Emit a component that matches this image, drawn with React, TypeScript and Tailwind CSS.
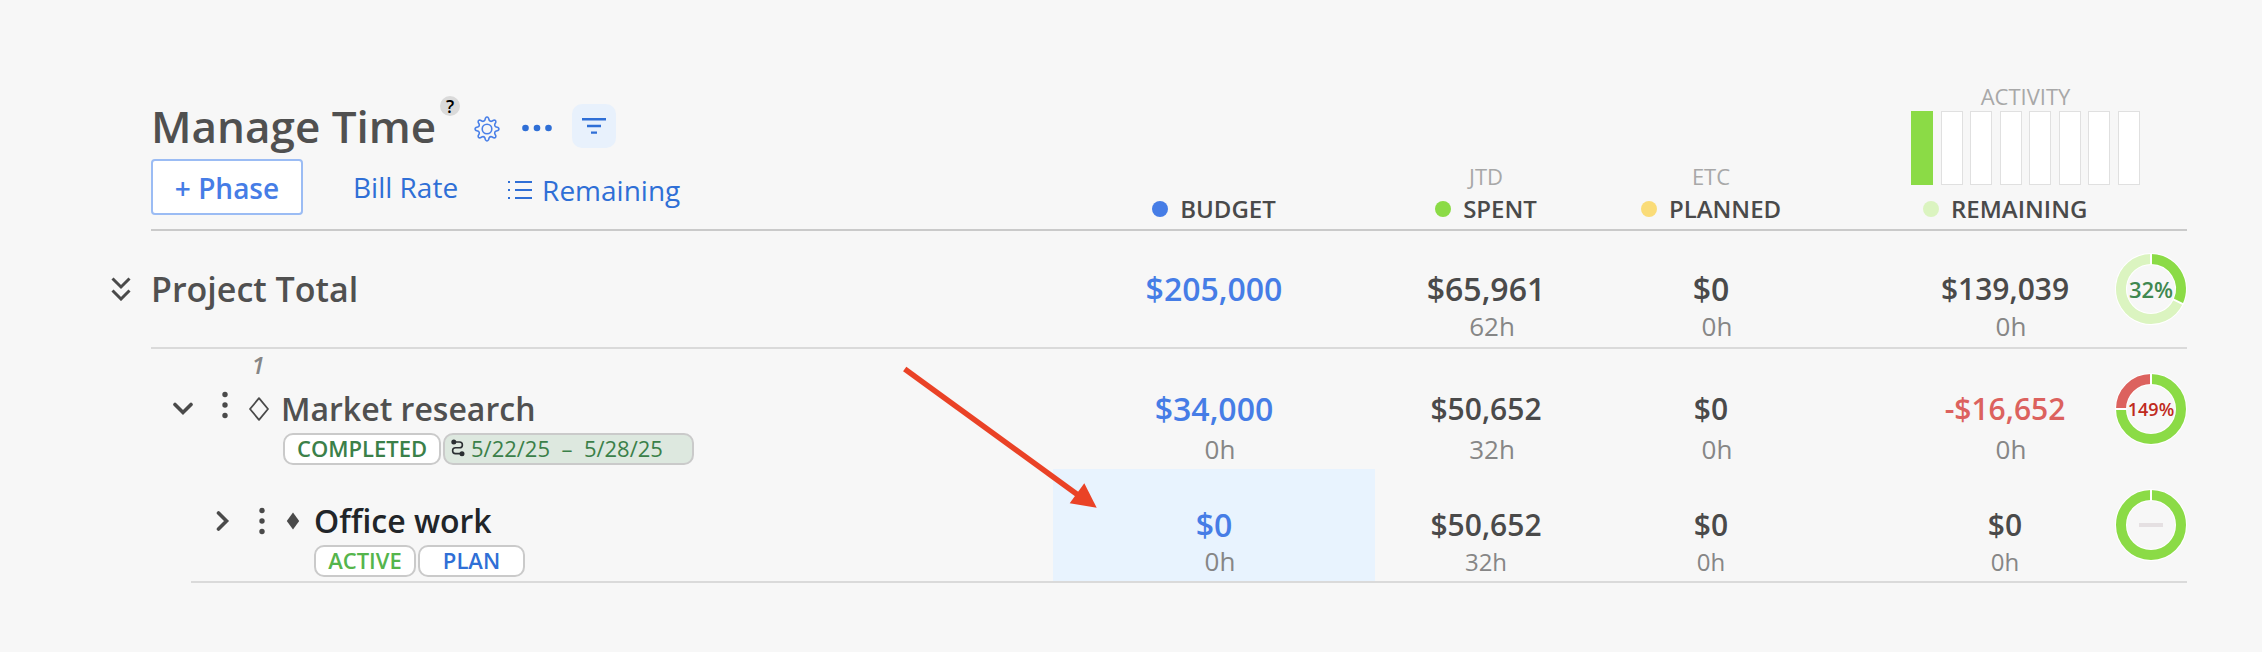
import clsx from "clsx";

type Amount = { value: string; hours?: string; valueClass?: string; hoursClass?: string };

const LARGE = "text-[32px]";
const MEDIUM = "text-[30px]";
const HOURS = "text-[26px] pl-3";
const HOURS_SMALL = "text-[24px] pt-px";

/* ---------- ICONS ---------- */

function gearPath() {
  const point = (radius: number, degrees: number) => {
    const a = (degrees * Math.PI) / 180;
    return `${(13 + radius * Math.sin(a)).toFixed(2)} ${(13 - radius * Math.cos(a)).toFixed(2)}`;
  };
  let d = "";
  for (let i = 0; i < 8; i++) {
    const a = i * 45;
    d += `${i === 0 ? "M" : "L"}${point(9, a - 14)} L${point(11, a - 8)} Q${point(13, a)} ${point(11, a + 8)} L${point(9, a + 14)} Q${point(8, a + 22)} ${point(9, a + 31)} `;
  }
  return d + "Z";
}

function GearIcon() {
  return (
    <svg width="26" height="26" viewBox="0 0 26 26" fill="none" stroke="currentColor" strokeWidth="1.6" strokeLinejoin="round">
      <path d={gearPath()} />
      <circle cx="13" cy="13" r="4.8" />
    </svg>
  );
}

function MoreIcon() {
  return (
    <svg width="30" height="8" viewBox="0 0 30 8" fill="currentColor">
      <circle cx="3.5" cy="4" r="3.3" />
      <circle cx="15" cy="4" r="3.3" />
      <circle cx="26.5" cy="4" r="3.3" />
    </svg>
  );
}

function FilterIcon() {
  return (
    <svg width="24" height="16" viewBox="0 0 24 16" fill="currentColor">
      <path d="M0 0h24v2.5H0zM5 6.8h14v2.4H5zM9 13.4h6v2.4H9z" />
    </svg>
  );
}

function ListIcon() {
  return (
    <svg width="24" height="20" viewBox="0 0 24 20" fill="currentColor">
      <path d="M7 1h17v2H7zM7 9h17v2H7zM7 17h17v2H7zM0 1h2v2H0zM0 9h2v2H0zM0 17h2v2H0z" />
    </svg>
  );
}

function DoubleChevronIcon() {
  return (
    <svg width="20" height="24" viewBox="0 0 20 24" fill="none" stroke="currentColor" strokeWidth="3">
      <path d="M1.5 1.5 10 10l8.5-8.5M1.5 13.5 10 22l8.5-8.5" />
    </svg>
  );
}

function ChevronDownIcon() {
  return (
    <svg width="20" height="14" viewBox="0 0 20 14" fill="none" stroke="currentColor" strokeWidth="3.6">
      <path d="m2 2.5 8 8 8-8" strokeLinecap="round" />
    </svg>
  );
}

function ChevronRightIcon() {
  return (
    <svg width="14" height="20" viewBox="0 0 14 20" fill="none" stroke="currentColor" strokeWidth="3.6">
      <path d="m2.5 2 8 8-8 8" strokeLinecap="round" />
    </svg>
  );
}

function KebabIcon() {
  return (
    <svg width="8" height="28" viewBox="0 0 8 28" fill="currentColor">
      <circle cx="4" cy="3.5" r="2.7" />
      <circle cx="4" cy="14" r="2.7" />
      <circle cx="4" cy="24.5" r="2.7" />
    </svg>
  );
}

function DiamondIcon() {
  return (
    <svg width="20" height="24" viewBox="0 0 20 24" fill="none" stroke="currentColor" strokeWidth="1.8" strokeLinejoin="round">
      <path d="M10 1.2 19 12l-9 10.8L1 12z" />
    </svg>
  );
}

function SmallDiamondIcon() {
  return (
    <svg width="14" height="18" viewBox="0 0 14 18" fill="currentColor">
      <path d="M7 .5 13.2 9 7 17.5.8 9z" />
    </svg>
  );
}

function RouteIcon() {
  return (
    <svg width="14" height="18" viewBox="0 0 14 18" fill="none" stroke="#2b2f33" strokeWidth="1.6">
      <path d="M3 3h5.5a2.9 2.9 0 0 1 0 5.8h-4a2.9 2.9 0 0 0 0 5.8H11" />
      <circle cx="2.8" cy="3" r="1.7" fill="#2b2f33" />
      <circle cx="11" cy="14.8" r="1.7" fill="#2b2f33" />
    </svg>
  );
}

/* ---------- DONUT ---------- */

type Slice = { from: number; to: number; color: string };

function Donut({ slices, label, labelClass }: { slices: Slice[]; label?: string; labelClass?: string }) {
  const point = (radius: number, turn: number) => {
    const a = turn * 2 * Math.PI;
    return `${(36 + radius * Math.sin(a)).toFixed(2)} ${(36 - radius * Math.cos(a)).toFixed(2)}`;
  };

  return (
    <div className="relative -mt-4 size-[72px]">
      <svg width="72" height="72" viewBox="0 0 72 72" fill="none">
        <circle cx="36" cy="36" r="30" stroke="#fff" strokeWidth="12" />
        {slices.map((s) =>
          s.to - s.from === 1 ? (
            <circle key={s.from} cx="36" cy="36" r="30" stroke={s.color} strokeWidth="10" />
          ) : (
            <path
              key={s.from}
              d={`M${point(30, s.from)} A30 30 0 ${s.to - s.from > 0.5 ? 1 : 0} 1 ${point(30, s.to)}`}
              stroke={s.color}
              strokeWidth="10"
            />
          )
        )}
        {slices.map((s) => (
          <path key={s.from} d={`M${point(24, s.from)} L${point(36, s.from)}`} stroke="#fff" strokeWidth="2" />
        ))}
        {!label && <path d="M24 36h24" stroke="#e5e0e2" strokeWidth="4" />}
      </svg>
      {label && (
        <span className={clsx("absolute inset-0 flex items-center justify-center font-semibold", labelClass)}>
          {label}
        </span>
      )}
    </div>
  );
}

/* ---------- CELLS ---------- */

function AmountText({ value, hours, valueClass, hoursClass }: Amount) {
  return (
    <>
      <div className={clsx("font-semibold leading-10", valueClass)}>{value}</div>
      {hours && <div className={clsx("leading-8 text-[#868686]", hoursClass)}>{hours}</div>}
    </>
  );
}

function ColumnTitle({ dotClass, children }: { dotClass: string; children: string }) {
  return (
    <div className="flex items-center gap-3 text-[24px] leading-[30px] font-semibold text-[#4a4a4a]">
      <span className={clsx("size-4 rounded-full", dotClass)} />
      {children}
    </div>
  );
}

function Tag({ className, children }: { className: string; children: React.ReactNode }) {
  return (
    <button
      type="button"
      className={clsx("flex h-8 items-center rounded-[10px] border-2 border-[#cacaca] pb-0.5 text-[22px] leading-[26px]", className)}
    >
      {children}
    </button>
  );
}

export default function App() {
  return (
    <main className="min-h-screen bg-[#f7f7f7] pt-[81px] pr-[75px] pb-16 pl-[106px] font-['Open_Sans',sans-serif] text-[#4a4a4a]">
      <table className="w-full table-fixed border-separate border-spacing-0">
        <colgroup>
          <col className="w-[45px]" />
          <col className="w-[40px]" />
          <col />
          <col className="w-[322px]" />
          <col className="w-[222px]" />
          <col className="w-[228px]" />
          <col className="w-[290px]" />
          <col className="w-[72px]" />
        </colgroup>

        {/* ---------- HEADER ---------- */}
        <thead>
          <tr className="h-[150px] align-bottom [&>*]:p-0 [&>*]:font-normal">
            <td />
            <th colSpan={2} className="border-b-2 border-[#cacaca] text-left">
              <div className="flex h-[60px] items-center">
                <h1 className="text-[44px] leading-[60px] font-semibold text-[#505050]">Manage Time</h1>
                <button
                  type="button"
                  aria-label="Help"
                  className="mb-10 ml-1 size-5 rounded-full bg-[#dadada] text-[18px] leading-5 font-semibold text-black"
                >
                  ?
                </button>
                <button type="button" aria-label="Settings" className="mt-1.5 ml-3.5 text-[#4a80e8]">
                  <GearIcon />
                </button>
                <button type="button" aria-label="More" className="mt-1 ml-[22px] text-[#2f6fd6]">
                  <MoreIcon />
                </button>
                <button
                  type="button"
                  aria-label="Filter"
                  className="ml-5 flex size-11 items-center justify-center rounded-[10px] bg-[#e8f1fc] text-[#2f6fd6]"
                >
                  <FilterIcon />
                </button>
              </div>
              <div className="mt-[3px] mb-3.5 flex h-14 items-center text-[28px] leading-9 text-[#2f6fd6]">
                <button
                  type="button"
                  className="h-14 w-[152px] rounded border-2 border-[#9bbcf4] bg-white pt-0.5 font-semibold text-[#467de6]"
                >
                  + Phase
                </button>
                <button type="button" className="ml-[50px]">
                  Bill Rate
                </button>
                <button type="button" className="ml-[50px] flex items-center gap-2.5 pt-1.5">
                  <ListIcon />
                  Remaining
                </button>
              </div>
            </th>
            <th className="border-b-2 border-[#cacaca]">
              <div className="mb-[5px] flex flex-col items-center">
                <ColumnTitle dotClass="bg-[#467de6]">BUDGET</ColumnTitle>
              </div>
            </th>
            <th className="border-b-2 border-[#cacaca]">
              <div className="mb-[5px] flex flex-col items-center gap-[3px]">
                <span className="text-[22px] leading-[30px] text-[#a8a8a8]">JTD</span>
                <ColumnTitle dotClass="bg-[#8bdb46]">SPENT</ColumnTitle>
              </div>
            </th>
            <th className="border-b-2 border-[#cacaca]">
              <div className="mb-[5px] flex flex-col items-center gap-[3px]">
                <span className="text-[22px] leading-[30px] text-[#a8a8a8]">ETC</span>
                <ColumnTitle dotClass="bg-[#fadc78]">PLANNED</ColumnTitle>
              </div>
            </th>
            <th colSpan={2} className="border-b-2 border-[#cacaca]">
              <div className="mb-[5px] ml-[86px] w-[229px]">
                <div className="text-[22px] leading-[30px] text-[#a8a8a8]">ACTIVITY</div>
                <div className="mb-[9px] flex h-[74px] justify-between">
                  <span className="w-[22px] bg-[#8bdb46]" />
                  {[1, 2, 3, 4, 5, 6, 7].map((week) => (
                    <span key={week} className="w-[22px] border border-[#e0e0e0] bg-white" />
                  ))}
                </div>
                <div className="pl-3">
                  <ColumnTitle dotClass="bg-[#dbf4c0]">REMAINING</ColumnTitle>
                </div>
              </div>
            </th>
          </tr>
        </thead>

        <tbody>
          {/* ---------- PROJECT TOTAL ---------- */}
          <tr className="h-[118px] text-center align-top [&>*]:px-0 [&>*]:pt-[38px] [&>*]:pb-0">
            <td>
              <button type="button" aria-label="Expand all" className="ml-[5px] flex h-10 items-center">
                <DoubleChevronIcon />
              </button>
            </td>
            <th colSpan={2} className="border-b-2 border-[#dadada] text-left text-[34px] leading-10 font-semibold text-[#505050]">
              Project Total
            </th>
            <td className="border-b-2 border-[#dadada]">
              <AmountText value="$205,000" valueClass={clsx(LARGE, "text-[#467de6]")} />
            </td>
            <td className="border-b-2 border-[#dadada]">
              <AmountText value="$65,961" hours="62h" valueClass={clsx(LARGE, "mb-px")} hoursClass={HOURS} />
            </td>
            <td className="border-b-2 border-[#dadada]">
              <AmountText value="$0" hours="0h" valueClass={clsx(LARGE, "mb-px")} hoursClass={HOURS} />
            </td>
            <td className="border-b-2 border-[#dadada]">
              <div className="pl-[70px]">
                <AmountText value="$139,039" hours="0h" valueClass={clsx(MEDIUM, "mb-px")} hoursClass={HOURS} />
              </div>
            </td>
            <td className="border-b-2 border-[#dadada]">
              <Donut
                slices={[
                  { from: 0, to: 0.32, color: "#8bdb46" },
                  { from: 0.32, to: 1, color: "#dbf4c0" },
                ]}
                label="32%"
                labelClass="text-[22px] text-[#3f8850]"
              />
            </td>
          </tr>

          {/* ---------- MARKET RESEARCH ---------- */}
          <tr className="h-[120px] text-center align-top [&>td]:px-0 [&>td]:pt-10 [&>td]:pb-0">
            <td />
            <th colSpan={2} className="p-0 pt-1 text-left font-normal">
              <div className="ml-[97px] w-5 text-center text-[24px] leading-6 font-semibold text-[#868686] italic">1</div>
              <div className="mt-3 flex h-10 items-center pl-[22px]">
                <button type="button" aria-label="Collapse Market research">
                  <ChevronDownIcon />
                </button>
                <button type="button" aria-label="Market research menu" className="mb-2 ml-7">
                  <KebabIcon />
                </button>
                <span className="ml-5">
                  <DiamondIcon />
                </span>
                <span className="ml-3 text-[32px] leading-10 font-semibold text-[#505050]">Market research</span>
              </div>
              <div className="mt-1 ml-[132px] flex gap-0.5">
                <Tag className="w-[158px] justify-center bg-white font-semibold text-[#3b8049]">COMPLETED</Tag>
                <Tag className="w-[251px] gap-1.5 bg-[#dde8df] pl-1.5 whitespace-pre text-[#3b8049]">
                  <RouteIcon />
                  <span>{"5/22/25  –  5/28/25"}</span>
                </Tag>
              </div>
            </th>
            <td>
              <AmountText value="$34,000" hours="0h" valueClass={clsx(LARGE, "mb-1 text-[#467de6]")} hoursClass={HOURS} />
            </td>
            <td>
              <AmountText value="$50,652" hours="32h" valueClass={clsx(MEDIUM, "mb-1")} hoursClass={HOURS} />
            </td>
            <td>
              <AmountText value="$0" hours="0h" valueClass={clsx(MEDIUM, "mb-1")} hoursClass={HOURS} />
            </td>
            <td>
              <div className="pl-[70px]">
                <AmountText value="-$16,652" hours="0h" valueClass={clsx(MEDIUM, "mb-1 text-[#dc625e]")} hoursClass={HOURS} />
              </div>
            </td>
            <td>
              <Donut
                slices={[
                  { from: 0, to: 0.75, color: "#8bdb46" },
                  { from: 0.75, to: 1, color: "#dc625e" },
                ]}
                label="149%"
                labelClass="text-[18px] text-[#c02a20]"
              />
            </td>
          </tr>

          {/* ---------- OFFICE WORK ---------- */}
          <tr className="h-[114px] text-center align-top [&>td]:px-0 [&>td]:pt-9 [&>td]:pb-0">
            <td colSpan={2} />
            <th className="border-b-2 border-[#dadada] p-0 pt-8 text-left font-normal">
              <div className="flex h-10 items-center pl-[25px]">
                <button type="button" aria-label="Expand Office work">
                  <ChevronRightIcon />
                </button>
                <button type="button" aria-label="Office work menu" className="ml-7">
                  <KebabIcon />
                </button>
                <span className="ml-5">
                  <SmallDiamondIcon />
                </span>
                <span className="ml-3.5 text-[32px] leading-10 font-semibold text-[#212529]">Office work</span>
              </div>
              <div className="mt-1 ml-[123px] flex gap-0.5">
                <Tag className="w-[102px] justify-center bg-white font-semibold text-[#55b54c]">ACTIVE</Tag>
                <Tag className="w-[107px] justify-center bg-white font-semibold text-[#2f6fd6]">PLAN</Tag>
              </div>
            </th>
            <td className="relative border-b-2 border-[#dadada] bg-[#e8f3fe] bg-clip-padding">
              <AmountText value="$0" hours="0h" valueClass={clsx(LARGE, "text-[#467de6]")} hoursClass={HOURS} />
              <svg
                className="pointer-events-none absolute -top-[104px] -left-[151px]"
                width="196"
                height="146"
                viewBox="0 0 196 146"
                fill="#ea4226"
              >
                <path d="M2.7 4 176 130" stroke="#ea4226" strokeWidth="5.5" />
                <path d="m194.7 142.7-12.4-24.4-14.6 20z" />
              </svg>
            </td>
            <td className="border-b-2 border-[#dadada]">
              <AmountText value="$50,652" hours="32h" valueClass={MEDIUM} hoursClass={HOURS_SMALL} />
            </td>
            <td className="border-b-2 border-[#dadada]">
              <AmountText value="$0" hours="0h" valueClass={MEDIUM} hoursClass={HOURS_SMALL} />
            </td>
            <td className="border-b-2 border-[#dadada]">
              <div className="pl-[70px]">
                <AmountText value="$0" hours="0h" valueClass={MEDIUM} hoursClass={HOURS_SMALL} />
              </div>
            </td>
            <td className="border-b-2 border-[#dadada]">
              <Donut slices={[{ from: 0, to: 1, color: "#8bdb46" }]} />
            </td>
          </tr>
        </tbody>
      </table>
    </main>
  );
}
